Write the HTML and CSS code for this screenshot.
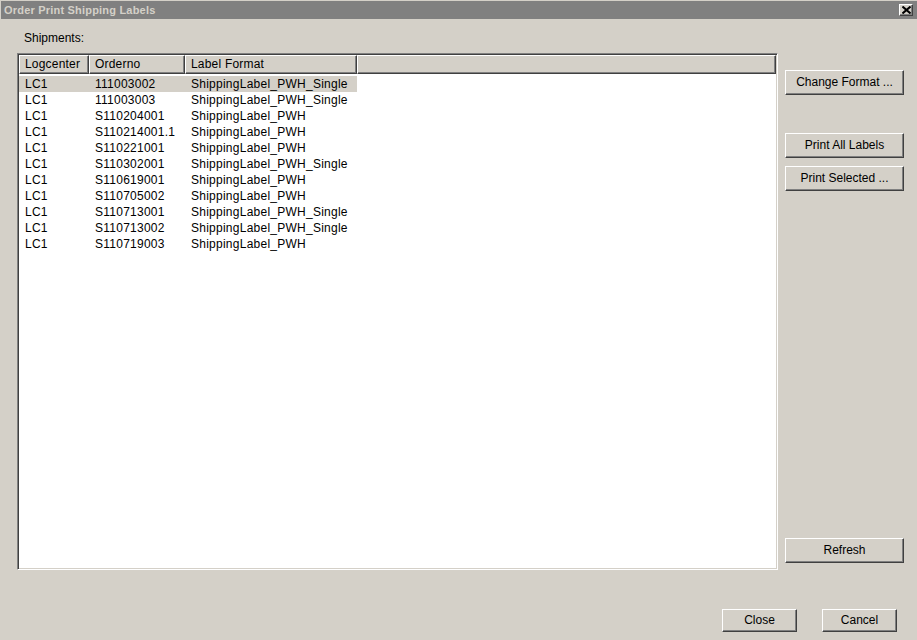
FILE: index.html
```html
<!DOCTYPE html>
<html>
<head>
<meta charset="utf-8">
<link rel="stylesheet" href="styles.css">
</head>
<body>
<div class="window">
  <div class="titlebar">
    <span class="title">Order Print Shipping Labels</span>
    <span class="close-btn"><svg width="9" height="8" viewBox="0 0 9 8"><path d="M0.5 0.5 L8.5 7.5 M8.5 0.5 L0.5 7.5" stroke="#000" stroke-width="2"/></svg></span>
  </div>
  <div class="content">
    <div class="label">Shipments:</div>
    <div class="main">
      <div class="table">
        <div class="thead">
          <div class="th c1">Logcenter</div>
          <div class="th c2">Orderno</div>
          <div class="th c3">Label Format</div>
          <div class="th filler"></div>
        </div>
        <div class="tbody">
          <div class="tr selected"><div class="td c1">LC1</div><div class="td c2">111003002</div><div class="td c3">ShippingLabel_PWH_Single</div></div>
          <div class="tr"><div class="td c1">LC1</div><div class="td c2">111003003</div><div class="td c3">ShippingLabel_PWH_Single</div></div>
          <div class="tr"><div class="td c1">LC1</div><div class="td c2">S110204001</div><div class="td c3">ShippingLabel_PWH</div></div>
          <div class="tr"><div class="td c1">LC1</div><div class="td c2">S110214001.1</div><div class="td c3">ShippingLabel_PWH</div></div>
          <div class="tr"><div class="td c1">LC1</div><div class="td c2">S110221001</div><div class="td c3">ShippingLabel_PWH</div></div>
          <div class="tr"><div class="td c1">LC1</div><div class="td c2">S110302001</div><div class="td c3">ShippingLabel_PWH_Single</div></div>
          <div class="tr"><div class="td c1">LC1</div><div class="td c2">S110619001</div><div class="td c3">ShippingLabel_PWH</div></div>
          <div class="tr"><div class="td c1">LC1</div><div class="td c2">S110705002</div><div class="td c3">ShippingLabel_PWH</div></div>
          <div class="tr"><div class="td c1">LC1</div><div class="td c2">S110713001</div><div class="td c3">ShippingLabel_PWH_Single</div></div>
          <div class="tr"><div class="td c1">LC1</div><div class="td c2">S110713002</div><div class="td c3">ShippingLabel_PWH_Single</div></div>
          <div class="tr"><div class="td c1">LC1</div><div class="td c2">S110719003</div><div class="td c3">ShippingLabel_PWH</div></div>
        </div>
      </div>
      <div class="side">
        <div class="btn side-btn first">Change Format ...</div>
        <div class="btn side-btn print-all">Print All Labels</div>
        <div class="btn side-btn print-sel">Print Selected ...</div>
        <div class="btn side-btn refresh">Refresh</div>
      </div>
    </div>
    <div class="bottom">
      <div class="btn bottom-btn">Close</div>
      <div class="btn bottom-btn">Cancel</div>
    </div>
  </div>
</div>
</body>
</html>
```
FILE: styles.css
```css
html, body {
  margin: 0;
  padding: 0;
  background: #d4d0c8;
}
body {
  font-family: "Liberation Sans", Arial, sans-serif;
  font-size: 12px;
  color: #000;
}
.window {
  width: 917px;
  height: 640px;
  display: flex;
  flex-direction: column;
  background: #d4d0c8;
  box-sizing: border-box;
  overflow: hidden;
}
.titlebar {
  margin: 1px 0 0 1px;
  height: 18px;
  background: #808080;
  display: flex;
  align-items: center;
  justify-content: space-between;
  padding: 0 4px 0 3px;
}
.title {
  font-weight: bold;
  font-size: 11px;
  letter-spacing: 0.2px;
  color: #d4d0c8;
  line-height: 18px;
}
.close-btn {
  width: 14px;
  height: 12px;
  box-sizing: border-box;
  background: #d4d0c8;
  border-top: 1px solid #fff;
  border-left: 1px solid #fff;
  border-right: 1px solid #404040;
  border-bottom: 1px solid #404040;
  box-shadow: inset -1px -1px 0 #808080;
  display: flex;
  align-items: center;
  justify-content: center;
}
.close-btn svg { display: block; }
.content {
  flex: 1;
  display: flex;
  flex-direction: column;
  padding: 0 0 0 17px;
}
.label {
  padding: 12px 0 0 7px;
  height: 14px;
  line-height: 14px;
  margin-bottom: 8px;
}
.main {
  display: flex;
  height: 517px;
}
.table {
  width: 761px;
  height: 517px;
  box-sizing: border-box;
  background: #fff;
  border-top: 1px solid #808080;
  border-left: 1px solid #808080;
  border-right: 1px solid #fff;
  border-bottom: 1px solid #fff;
  box-shadow: inset 1px 1px 0 #404040, inset -1px -1px 0 #d4d0c8;
  padding: 1px;
  display: flex;
  flex-direction: column;
}
.thead {
  display: flex;
  height: 19px;
  background: #d4d0c8;
}
.th {
  box-sizing: border-box;
  height: 19px;
  line-height: 16px;
  padding-left: 5px;
  border-top: 1px solid #fff;
  border-left: 1px solid #fff;
  border-right: 1px solid #404040;
  border-bottom: 1px solid #404040;
  box-shadow: inset -1px -1px 0 #808080;
  letter-spacing: 0.2px;
  white-space: nowrap;
}
.c1 { width: 70px; }
.c2 { width: 96px; }
.c3 { width: 172px; }
.th.filler { flex: 1; }
.tbody {
  padding-top: 2px;
}
.tr {
  display: flex;
  height: 16px;
  width: 338px;
}
.tr.selected { background: #d4d0c8; }
.td {
  box-sizing: border-box;
  line-height: 16px;
  padding-left: 6px;
  letter-spacing: 0.25px;
  white-space: nowrap;
}
.td.c1 { padding-left: 6px; }
.side {
  width: 119px;
  margin-left: 7px;
  display: flex;
  flex-direction: column;
}
.btn {
  box-sizing: border-box;
  background: #d4d0c8;
  border-top: 1px solid #fff;
  border-left: 1px solid #fff;
  border-right: 1px solid #404040;
  border-bottom: 1px solid #404040;
  box-shadow: inset -1px -1px 0 #808080;
  text-align: center;
  white-space: nowrap;
}
.side-btn {
  height: 25px;
  line-height: 22px;
}
.side-btn.first { margin-top: 17px; }
.side-btn.print-all { margin-top: 38px; }
.side-btn.print-sel { margin-top: 8px; }
.side-btn.refresh { margin-top: auto; margin-bottom: 7px; }
.bottom {
  display: flex;
  justify-content: flex-end;
  gap: 25px;
  margin-top: 39px;
  padding-right: 20px;
}
.bottom-btn {
  width: 75px;
  height: 23px;
  line-height: 20px;
}
```
